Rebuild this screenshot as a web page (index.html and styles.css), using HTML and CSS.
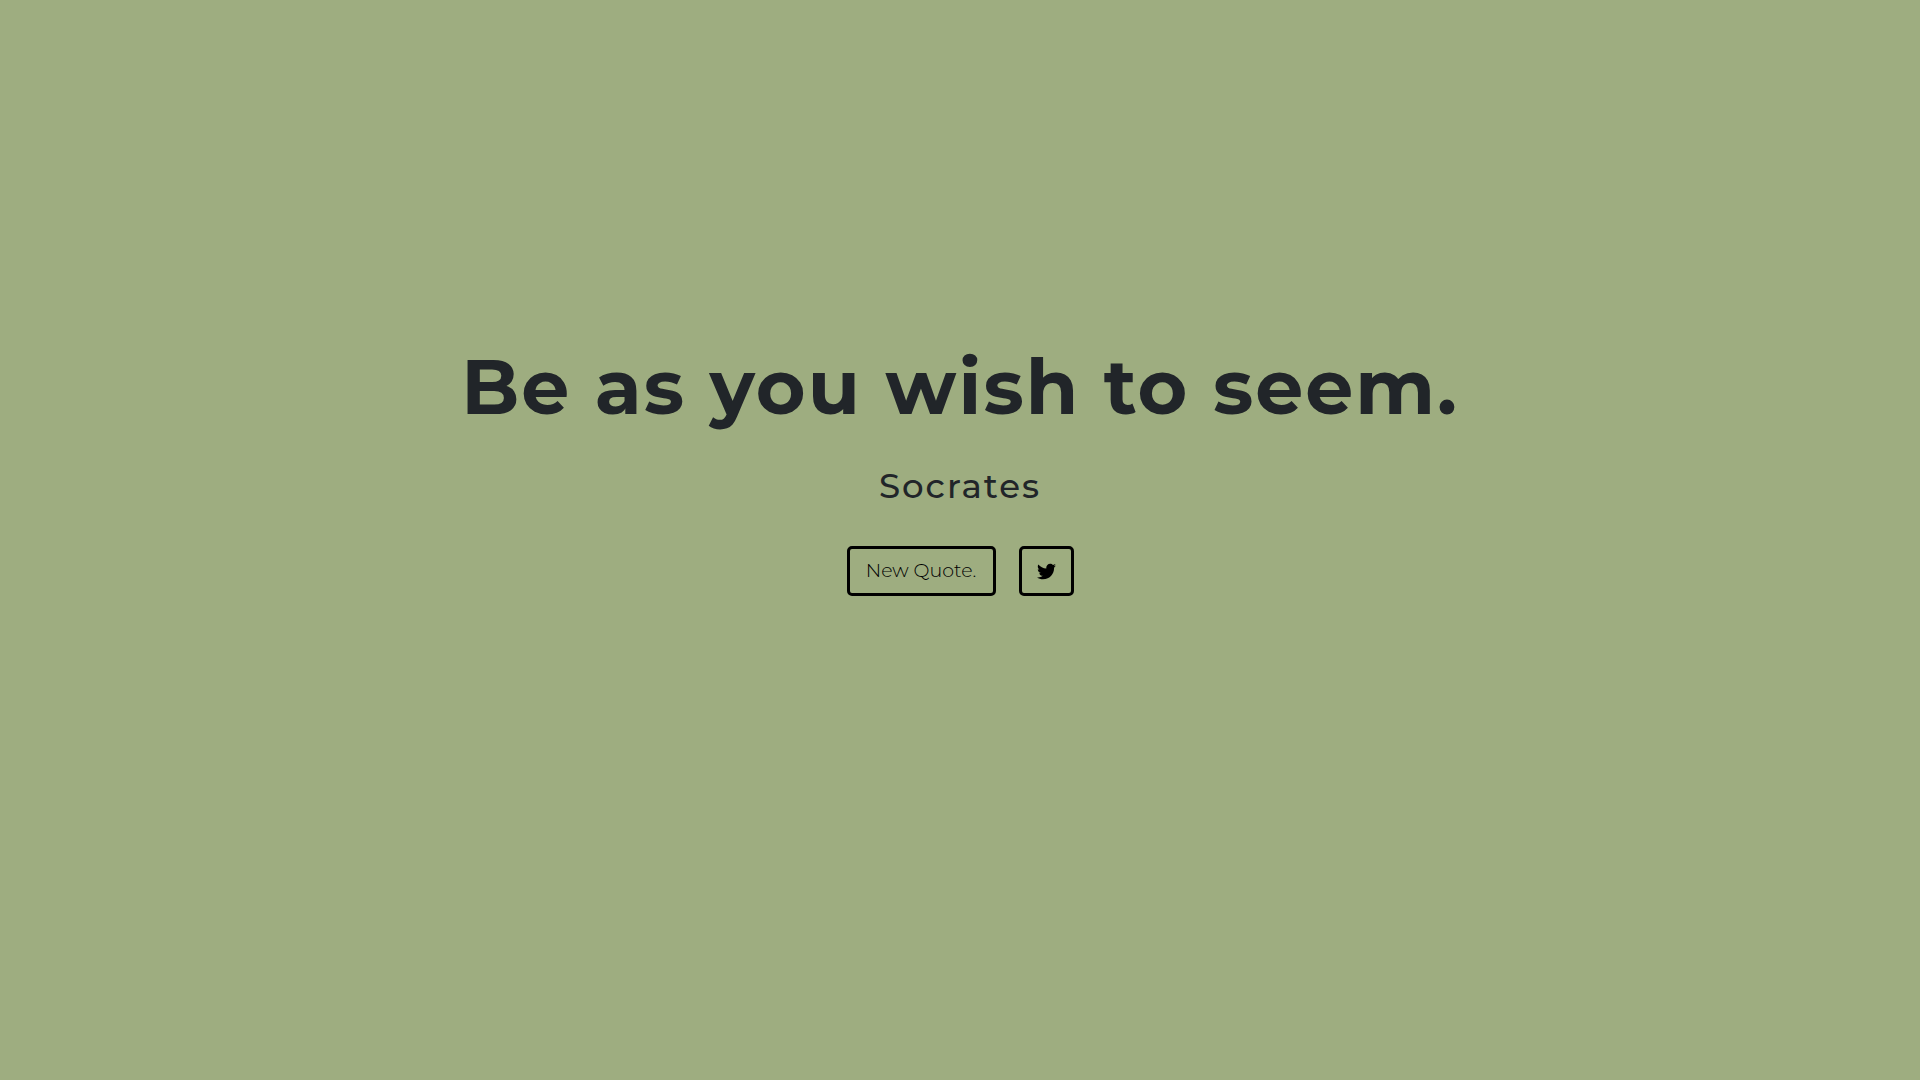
FILE: index.html
```
<!DOCTYPE html>
<html lang="en">
<head>
<meta charset="utf-8">
<meta name="viewport" content="width=device-width, initial-scale=1">
<title>Quotes</title>
<link rel="stylesheet" href="styles.css">
</head>
<body>
<main class="quote-box">
  <h1 class="quote">Be as you wish to seem.</h1>
  <p class="author">Socrates</p>
  <div class="actions">
    <button class="btn btn-new" type="button">New Quote.</button>
    <a class="btn" href="#tweet" aria-label="Tweet this quote">
      <svg class="icon" viewBox="0 0 512 512" aria-hidden="true"><path fill="currentColor" d="M459.37 151.716c.325 4.548.325 9.097.325 13.645 0 138.72-105.583 298.558-298.558 298.558-59.452 0-114.68-17.219-161.137-47.106 8.447.974 16.568 1.299 25.34 1.299 49.055 0 94.213-16.568 130.274-44.832-46.132-.975-84.792-31.188-98.112-72.772 6.498.974 12.995 1.624 19.818 1.624 9.421 0 18.843-1.3 27.614-3.573-48.081-9.747-84.143-51.98-84.143-102.985v-1.299c13.969 7.797 30.214 12.67 47.431 13.319-28.264-18.843-46.781-51.005-46.781-87.391 0-19.492 5.197-37.36 14.294-52.954 51.655 63.675 129.3 105.258 216.365 109.807-1.624-7.797-2.599-15.918-2.599-24.04 0-57.828 46.782-104.934 104.934-104.934 30.213 0 57.502 12.67 76.67 33.137 23.715-4.548 46.456-13.32 66.599-25.34-7.798 24.366-24.366 44.833-46.132 57.827 21.117-2.273 41.584-8.122 60.426-16.243-14.292 20.791-32.161 39.308-52.628 54.253z"/></svg>
    </a>
  </div>
</main>
</body>
</html>
```
FILE: styles.css
```
* {
  box-sizing: border-box;
}

body {
  margin: 0;
  min-height: 100vh;
  padding: 0 24px 146px;
  display: flex;
  align-items: center;
  justify-content: center;
  background: #9ead80;
  color: #212529;
  font-family: Montserrat, Inter, "Open Sans", sans-serif;
}

.quote-box {
  text-align: center;
}

.quote {
  margin: 0;
  font-size: 76px;
  line-height: 98px;
  font-weight: 700;
  letter-spacing: 2px;
}

.author {
  margin: 28px 0 38px;
  font-size: 34px;
  line-height: 44px;
  font-weight: 500;
  letter-spacing: 2px;
}

.actions {
  display: flex;
  flex-wrap: wrap;
  justify-content: center;
  gap: 23px;
}

.btn {
  display: flex;
  align-items: center;
  justify-content: center;
  min-height: 50px;
  padding: 8px 15px;
  border: 3px solid #000;
  border-radius: 5px;
  background: transparent;
  color: #000;
  font-family: inherit;
  font-size: 19px;
  line-height: 28px;
  font-weight: 300;
  text-decoration: none;
  cursor: pointer;
}

.btn-new {
  min-width: 149px;
}

.icon {
  width: 19px;
  height: 19px;
}
```
